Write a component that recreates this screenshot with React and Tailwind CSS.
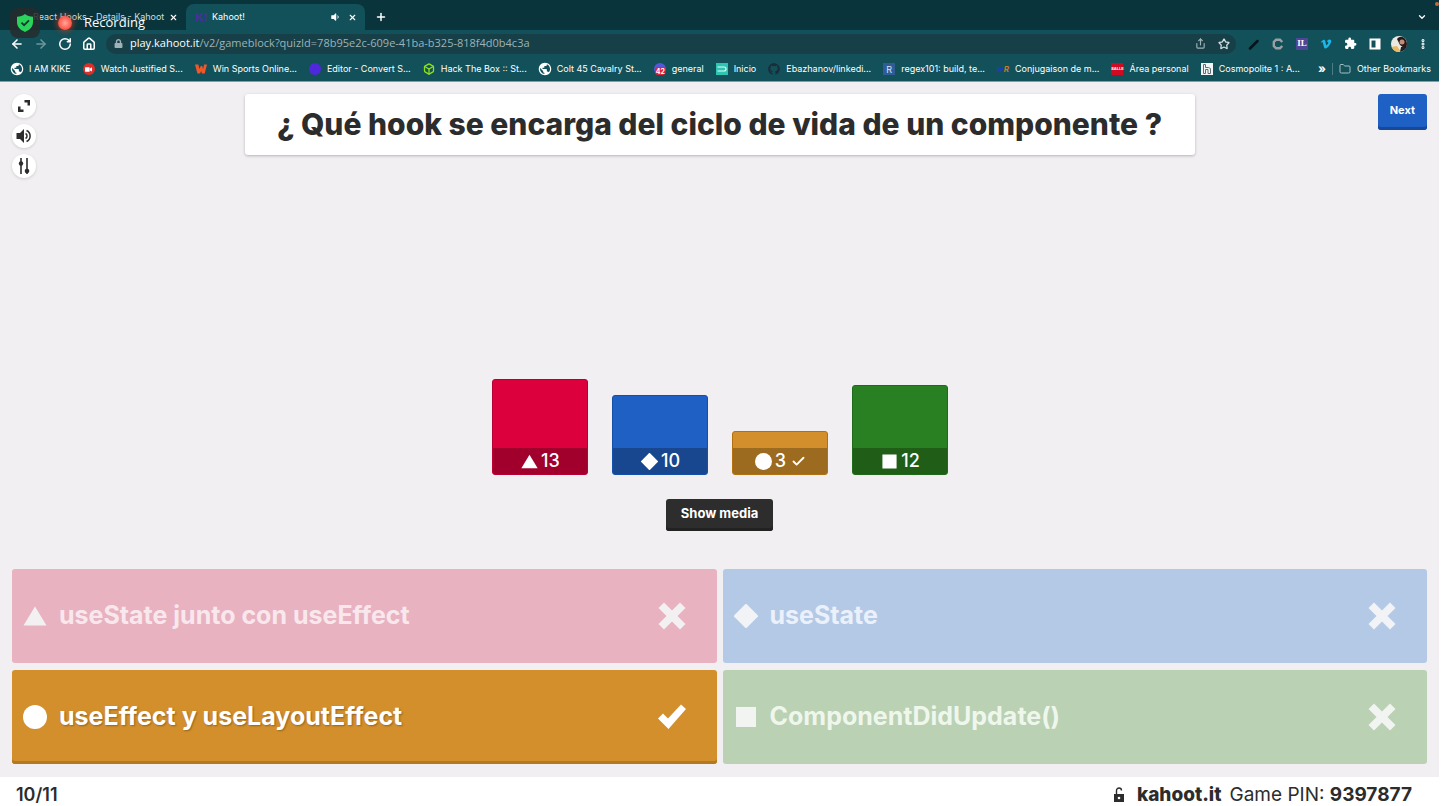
import { FaGithub, FaVimeoV, FaVideo, FaVolumeDown, FaLock } from "react-icons/fa";
import {
  ArrowLeft, ArrowRight, RotateCw, House, X, Plus, ChevronDown, Share, Star, Folder,
  EllipsisVertical, Box, Check,
} from "lucide-react";
import { MdPublic, MdExtension } from "react-icons/md";

const Globe = () => (
  <span className="flex size-3 items-center justify-center rounded-full bg-[#12505a]">
    <MdPublic className="size-3 scale-125 text-white" />
  </span>
);

const bookmarks = [
  { label: "I AM KIKE", icon: <Globe /> },
  {
    label: "Watch Justified S...",
    icon: (
      <span className="flex size-3 items-center justify-center rounded-full bg-[#dc2f2c]">
        <FaVideo className="size-[7px] text-white" />
      </span>
    ),
  },
  {
    label: "Win Sports Online...",
    icon: (
      <svg viewBox="0 0 12 12" className="size-3">
        <path d="M0 1.5h3.4l1 4.6 1.4-3h1.4l.9 2.8 1-4.4H12L9.7 10.6H7L6.2 8 5 10.6H2.4z" fill="#f0582a" />
      </svg>
    ),
  },
  { label: "Editor - Convert S...", icon: <span className="size-3 rounded-full bg-[#4f28de]" /> },
  { label: "Hack The Box :: St...", icon: <Box className="size-3 text-[#8fe01c]" strokeWidth={2.6} /> },
  { label: "Colt 45 Cavalry St...", icon: <Globe /> },
  {
    label: "general",
    icon: (
      <svg viewBox="0 0 12 12" className="size-3">
        <circle cx="6" cy="6" r="6" fill="#5557d8" />
        <rect x="1" y="4" width="10.5" height="8" rx="3" fill="#e0203c" />
        <text x="6.3" y="10.6" fontSize="7" fontWeight="700" textAnchor="middle" fill="#fff" fontFamily="Inter, sans-serif">42</text>
      </svg>
    ),
  },
  {
    label: "Inicio",
    icon: (
      <svg viewBox="0 0 12 12" className="size-3">
        <rect width="12" height="12" fill="#2fc4b2" />
        <path d="M1.5 4H8a2 2 0 0 1 0 4H1.5" fill="none" stroke="#d9fffa" strokeWidth="1.2" />
      </svg>
    ),
  },
  { label: "Ebazhanov/linkedi...", icon: <FaGithub className="size-3 text-[#1b2b38]" /> },
  {
    label: "regex101: build, te...",
    icon: <span className="flex size-3 items-center justify-center bg-[#2f5c94] text-[9px] leading-none text-[#d5e4f5]">R</span>,
  },
  {
    label: "Conjugaison de m...",
    icon: (
      <span className="flex size-3 items-center justify-center text-[8px] font-bold italic leading-none">
        <span className="text-[#1f3bc0]">w</span>
        <span className="text-[#c77a28]">R</span>
      </span>
    ),
  },
  {
    label: "Área personal",
    icon: <span className="flex size-3 items-center justify-center bg-[#cf0a22] text-[4px] font-bold leading-none text-white">SALLE</span>,
  },
  {
    label: "Cosmopolite 1 : A...",
    icon: (
      <svg viewBox="0 0 12 12" className="size-3">
        <rect width="12" height="12" fill="#f1f5f5" />
        <path d="M2.5 1.5v9h2v-4H7v4h2.500v-5l-2-1h-3v-3z" fill="none" stroke="#5c6f76" strokeWidth="1" />
      </svg>
    ),
  },
];

function Shape({ kind, className }) {
  return (
    <svg viewBox="0 0 24 24" className={className} fill="currentColor" aria-hidden="true">
      {kind === "triangle" && <path d="M12 2.5 23.5 21.5H.5z" />}
      {kind === "diamond" && <path d="M12-.5 24.5 12 12 24.5-.5 12z" />}
      {kind === "circle" && <circle cx="12" cy="12" r="12" />}
      {kind === "square" && <path d="M2 2h20v20H2z" />}
    </svg>
  );
}

const results = [
  { kind: "triangle", votes: 13, box: "h-24 bg-[#dc003c] border-[#b80035]", foot: "bg-[#a1002c]" },
  { kind: "diamond", votes: 10, box: "h-20 bg-[#1e60c4] border-[#1450a8]", foot: "bg-[#18478f]" },
  { kind: "circle", votes: 3, box: "h-11 bg-[#d38f2c] border-[#b3700f]", foot: "bg-[#9c6b20]", correct: true },
  { kind: "square", votes: 12, box: "h-[90px] bg-[#288022] border-[#1f6b19]", foot: "bg-[#205e18]" },
];

const answers = [
  { kind: "triangle", text: "useState junto con useEffect", style: "bg-[#e9b2c0] text-[#f8e8ee]", mark: "text-[#f3f0f2]" },
  { kind: "diamond", text: "useState", style: "bg-[#b4c9e6] text-[#eaf1fa]", mark: "text-[#f1f3f6]" },
  { kind: "circle", text: "useEffect y useLayoutEffect", style: "bg-[#d38f2c] text-white shadow-[inset_0_-3px_0_#b27920] [text-shadow:1px_1px_2px_rgba(0,0,0,0.3)]", mark: "text-white", correct: true },
  { kind: "square", text: "ComponentDidUpdate()", style: "bg-[#bad1b4] text-[#eff7ec]", mark: "text-[#f1f4f0]" },
];

function BrowserChrome() {
  return (
    <header className="relative bg-[#12505a] text-[9px] text-white">
      <div className="flex h-[30px] items-end bg-[#0a343b]">
        <div className="flex h-[26px] w-[186px] items-center pl-[33px] pr-2">
          <span className="flex-1 whitespace-nowrap text-[#cfdcde]">React Hooks - Details - Kahoot</span>
          <button aria-label="Close React Hooks tab" className="ml-1"><X className="size-[9px]" strokeWidth={3} /></button>
        </div>
        <div className="flex h-[26px] w-[179px] items-center rounded-t-lg bg-[#12505a] pl-[9px] pr-2">
          <span className="w-[17px] text-[11px] font-black text-[#45309c]">K!</span>
          <span className="flex-1">Kahoot!</span>
          <FaVolumeDown className="mr-2 size-[10px]" />
          <button aria-label="Close Kahoot tab"><X className="size-[9px]" strokeWidth={3} /></button>
        </div>
        <button aria-label="New tab" className="mb-[7px] ml-[10px]"><Plus className="size-3" strokeWidth={3} /></button>
        <button aria-label="Search tabs" className="mb-2 ml-auto mr-3"><ChevronDown className="size-[10px]" strokeWidth={3} /></button>
      </div>
      <span className="absolute right-0 top-[2px] size-1 rounded-full bg-[#c9693a]" />

      <nav className="flex h-[27px] items-center pl-[10px] pr-[14px]">
        <div className="flex items-center gap-[10px]">
          <button aria-label="Back"><ArrowLeft className="size-[14px]" strokeWidth={2.6} /></button>
          <button aria-label="Forward"><ArrowRight className="size-[14px] text-[#6d979d]" strokeWidth={2.6} /></button>
          <button aria-label="Reload"><RotateCw className="size-[14px]" strokeWidth={2.6} /></button>
          <button aria-label="Home"><House className="size-[14px]" strokeWidth={2.6} /></button>
        </div>
        <div className="ml-[10px] flex h-5 flex-1 items-center rounded-full bg-[#163f47] pl-2 pr-[6px] text-[#9db3b7]">
          <FaLock className="mr-[7px] size-[9px]" />
          <span className="flex-1 font-['Open_Sans',sans-serif] text-[11px]"><span className="text-white">play.kahoot.it</span>/v2/gameblock?quizId=78b95e2c-609e-41ba-b325-818f4d0b4c3a</span>
          <button aria-label="Share" className="mr-3"><Share className="size-[11px]" strokeWidth={2.5} /></button>
          <button aria-label="Bookmark this page" className="text-[#d5e0e2]"><Star className="size-3" strokeWidth={2.5} /></button>
        </div>
        <div className="ml-3 flex items-center gap-3">
          <svg viewBox="0 0 12 12" className="size-3"><path d="M2 10.5 9.5 3" stroke="#07141a" strokeWidth="2.5" strokeLinecap="round" /></svg>
          <svg viewBox="0 0 12 12" className="size-3"><path d="M10.3 4 8 1.8H4L1.8 4v4L4 10.2h4L10.3 8" fill="none" stroke="#9a9fa3" strokeWidth="2.4" /></svg>
          <span className="flex size-3 items-center justify-center bg-[#4d4796] font-['Liberation_Serif',serif] text-[9px] font-bold leading-none">IL</span>
          <FaVimeoV className="size-3 text-[#1ab7ea]" />
          <MdExtension className="size-[13px]" />
          <svg viewBox="0 0 12 12" className="size-3"><path d="M.5.5h11v11H.5zM2.5 2.5v7h4v-7z" fill="#fff" fillRule="evenodd" /></svg>
          <svg viewBox="0 0 16 16" className="-mx-[2px] size-4">
            <defs><clipPath id="avatar"><circle cx="8" cy="8" r="8" /></clipPath></defs>
            <g clipPath="url(#avatar)">
              <rect width="16" height="16" fill="#ebe7e3" />
              <path d="M6 3c3-4 9-2 10 3v8L9 9z" fill="#26191a" />
              <circle cx="11" cy="6" r="2.5" fill="#c18d79" />
              <path d="M0 16v-5l6-1 4 6z" fill="#e9b960" />
              <path d="M9 16l1-5 6-1v6z" fill="#1d2024" />
            </g>
          </svg>
          <button aria-label="Browser menu" className="-mr-1"><EllipsisVertical className="size-3" strokeWidth={4} /></button>
        </div>
      </nav>

      <nav aria-label="Bookmarks" className="flex h-[25px] items-center justify-between overflow-hidden border-b border-[#7fa0a4] pl-[11px] pr-2">
        <div className="flex items-center gap-3">
          {bookmarks.map((b) => (
            <a key={b.label} href="#" className="flex shrink-0 items-center gap-[6px] whitespace-nowrap">
              <span className="flex size-3 shrink-0 items-center justify-center">{b.icon}</span>
              {b.label}
            </a>
          ))}
        </div>
        <div className="flex shrink-0 items-center gap-[6px] whitespace-nowrap">
          <button aria-label="More bookmarks" className="text-[12px] font-bold leading-none">»</button>
          <span className="h-3 w-px bg-[#4c7d85]" />
          <a href="#" className="flex items-center gap-[6px]"><Folder className="size-3 text-[#a9c0c3]" strokeWidth={2} />Other Bookmarks</a>
        </div>
      </nav>

      <div className="absolute left-[10px] top-2 flex items-center">
        <span className="flex size-[30px] items-center justify-center rounded-lg bg-[#262b2e]/85">
          <svg viewBox="0 0 18 20" className="h-[18px] w-4">
            <path d="M9 0c2.5 2 5.5 2.8 9 3v6c0 5.5-3.5 9-9 11C3.5 18 0 14.5 0 9V3c3.5-.2 6.5-1 9-3z" fill="#2ad45c" />
            <path d="m5 9.5 3 3 5.5-5.5" fill="none" stroke="#17382a" strokeWidth="2" />
          </svg>
        </span>
        <span className="ml-[18px] size-[14px] rounded-full bg-[radial-gradient(circle,#ffaa9c_0%,#ff5a4c_60%,#e8382e_100%)] shadow-[0_0_5px_2px_rgba(190,60,30,0.6)]" />
        <span className="ml-3 font-['Open_Sans',sans-serif] text-[13px]">Recording</span>
      </div>
    </header>
  );
}

function RoundButton({ label, children }) {
  return (
    <button aria-label={label} className="flex size-6 items-center justify-center rounded-full bg-white text-[#2c2c2c] shadow-[0_1px_3px_rgba(0,0,0,0.15)]">
      {children}
    </button>
  );
}

export default function App() {
  return (
    <div className="flex min-h-screen flex-col bg-white pr-[3px] font-['Inter',sans-serif] text-[#2c2c2c]">
      <BrowserChrome />

      <main className="flex flex-1 flex-col bg-[#f1eff2] px-3 pb-[13px] pt-3">
        <div className="grid grid-cols-[1fr_minmax(0,950px)_1fr] items-start">
          <div className="flex flex-col gap-[6px]">
            <RoundButton label="Full screen">
              <svg viewBox="0 0 14 14" className="size-[14px]"><path d="M7.5 1H13v5.500h-2.500v-3h-3zM1 7.500h2.500v3h3V13H1z" fill="currentColor" /></svg>
            </RoundButton>
            <RoundButton label="Sound">
              <svg viewBox="0 0 16 14" className="h-[14px] w-4">
                <path d="M.5 4h3.500L8 0v14l-4-4H.5z" fill="currentColor" />
                <path d="M9.5 4.5a2.800 2.800 0 0 1 0 5M10.500 1.500a6 6 0 0 1 0 11" fill="none" stroke="currentColor" strokeWidth="1.5" />
              </svg>
            </RoundButton>
            <RoundButton label="Settings">
              <svg viewBox="0 0 12 16" className="h-4 w-3">
                <path d="M3 0v16M9 0v16" stroke="currentColor" strokeWidth="1.6" />
                <circle cx="3" cy="5.5" r="2.2" fill="currentColor" /><circle cx="9" cy="13" r="2.3" fill="currentColor" />
              </svg>
            </RoundButton>
          </div>
          <h1 className="rounded-[3px] bg-white px-4 py-[10px] text-center text-[30px] font-extrabold leading-[41px] shadow-[0_1px_3px_rgba(0,0,0,0.25)]">
            ¿ Qué hook se encarga del ciclo de vida de un componente ?
          </h1>
          <button className="h-9 justify-self-end rounded-[3px] bg-[#1e60c4] px-3 pb-[3px] text-[11px] font-bold text-white shadow-[inset_0_-3px_0_#17499a]">Next</button>
        </div>

        <div className="flex flex-1 flex-col items-center justify-end pb-[38px]">
          <div className="flex items-end gap-6">
            {results.map((r) => (
              <div key={r.kind} className={`flex w-24 flex-col justify-end overflow-hidden rounded-[3px] border ${r.box}`}>
                <div className={`flex h-[26px] items-center justify-center gap-[3px] pl-[2px] text-[18px] font-medium leading-none text-white ${r.foot}`}>
                  <Shape kind={r.kind} className="size-[17px]" />
                  <span>{r.votes}</span>
                  {r.correct && <Check className="ml-[2px] size-[15px]" strokeWidth={3} />}
                </div>
              </div>
            ))}
          </div>
          <button className="mt-6 h-8 rounded-[3px] bg-[#2d2d2d] px-[15px] pb-[3px] text-[13px] font-bold text-white shadow-[inset_0_-3px_0_#222222]">Show media</button>
        </div>

        <div className="grid grid-cols-2 gap-x-[6px] gap-y-[7px]">
          {answers.map((a) => (
            <button key={a.kind} className={`flex h-[94px] items-center gap-3 rounded-[3px] pl-[11px] pr-[31px] text-left text-[25px] font-bold ${a.style}`}>
              <Shape kind={a.kind} className={`size-6 shrink-0 ${a.mark}`} />
              <span className="flex-1">{a.text}</span>
              <svg viewBox="0 0 28 28" className={`size-7 shrink-0 ${a.mark}`} fill="currentColor" aria-hidden="true">
                {a.correct ? <path d="M0 15.5 5 10.5l5 5L23 1.5 28 6 10.5 26z" /> : <path d="M6 .5l8 8 8-8L27.5 6l-8 8 8 8-5.500 5.500-8-8-8 8L.5 22l8-8-8-8z" />}
              </svg>
            </button>
          ))}
        </div>
      </main>

      <footer className="flex h-[29px] items-center bg-white pl-4 pr-[27px] pt-[6px] text-[19px] leading-[22px]">
        <span className="text-[18px] font-semibold">10/11</span>
        <div className="ml-auto flex items-center gap-2">
          <svg viewBox="0 0 12 16" className="mr-1 h-4 w-3" aria-hidden="true">
            <path d="M1 7h10v8H1z" fill="currentColor" />
            <path d="M3.5 7V3.5a2.5 2.5 0 0 1 5 0" fill="none" stroke="currentColor" strokeWidth="1.4" />
            <circle cx="6" cy="11" r="1.3" fill="#fff" />
          </svg>
          <span className="font-extrabold">kahoot.it</span>
          <span>Game PIN: <strong className="font-bold">9397877</strong></span>
        </div>
      </footer>
    </div>
  );
}
